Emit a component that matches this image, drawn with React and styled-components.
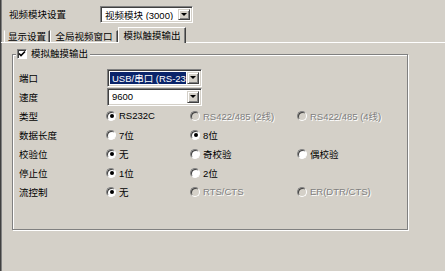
import React from "react"
import styled, { createGlobalStyle } from "styled-components"

const GlobalStyle = createGlobalStyle`
  html, body {
    margin: 0;
    background: #d4d0c8;
  }
  body {
    font-family: "Liberation Sans", "Noto Sans CJK SC", sans-serif;
    font-size: 9.5px;
    color: #000;
  }
`

const Window = styled.div`
  width: 445px;
  height: 271px;
  box-sizing: border-box;
  background: #d4d0c8;
  border-left: 1px solid #404040;
  box-shadow: inset 1px 0 #808080;
  overflow: hidden;
`

const TopRow = styled.div`
  display: flex;
  align-items: center;
  height: 27px;
  box-sizing: border-box;
  padding: 6px 0 0 8px;
  align-items: flex-start;
`

const TopLabel = styled.span`
  width: 91px;
  line-height: 17px;
`

const SelectBox = styled.div`
  display: flex;
  box-sizing: border-box;
  width: ${({ $w }) => $w}px;
  height: ${({ $h }) => $h}px;
  background: #fff;
  border: 1px solid;
  border-color: #808080 #fff #fff #808080;
  box-shadow: inset 1px 1px #404040, inset -1px -1px #d4d0c8;
  padding: 2px 2px 2px 2px;
`

const SelectValue = styled.span`
  flex: 1;
  overflow: hidden;
  white-space: nowrap;
  display: flex;
  align-items: center;
  padding-left: 2px;
  margin-right: 1px;
  background: ${({ $hl }) => ($hl ? "#0a246a" : "#fff")};
  color: ${({ $hl }) => ($hl ? "#fff" : "#000")};
`

const ArrowButton = styled.span`
  width: 12px;
  box-sizing: border-box;
  background: #d4d0c8;
  border: 1px solid;
  border-color: #d4d0c8 #404040 #404040 #d4d0c8;
  box-shadow: inset 1px 1px #fff, inset -1px -1px #808080;
  display: flex;
  align-items: center;
  justify-content: center;
  &::after {
    content: "";
    width: 0;
    height: 0;
    border-left: 3px solid transparent;
    border-right: 3px solid transparent;
    border-top: 3px solid #000;
  }
`

const TabStrip = styled.div`
  display: flex;
  align-items: flex-end;
  height: 16px;
  box-sizing: border-box;
  padding-left: 3px;
  border-bottom: 1px solid #fff;
`

const Tab = styled.div`
  box-sizing: border-box;
  width: ${({ $w }) => $w}px;
  height: ${({ $active }) => ($active ? 16 : 12)}px;
  margin-bottom: ${({ $active }) => ($active ? -1 : 0)}px;
  padding-top: ${({ $active }) => ($active ? 2 : 0)}px;
  background: #d4d0c8;
  border-left: 1px solid #fff;
  border-top: 1px solid ${({ $active }) => ($active ? "#fff" : "#d4d0c8")};
  border-right: 1px solid #404040;
  box-shadow: inset -1px 0 #808080;
  text-align: center;
  line-height: 11px;
  white-space: nowrap;
`

const Panel = styled.div`
  padding: 5px 0 0 11px;
`

const GroupBox = styled.fieldset`
  margin: 0;
  width: 396px;
  height: 182px;
  box-sizing: border-box;
  padding: 8px 0 0 6px;
  border: 1px solid #808080;
  box-shadow: inset 1px 1px #fff, 1px 1px #fff;
  min-inline-size: 0;
`

const Legend = styled.legend`
  display: flex;
  align-items: center;
  gap: 4px;
  margin-left: -3px;
  padding: 0 2px 0 1px;
  line-height: 12px;
  background: #d4d0c8;
`

const CheckBox = styled.span`
  width: 10px;
  height: 10px;
  box-sizing: border-box;
  background: #fff;
  border: 1px solid;
  border-color: #808080 #fff #fff #808080;
  box-shadow: inset 1px 1px #404040;
  display: flex;
  align-items: center;
  justify-content: center;
`

const Grid = styled.div`
  display: grid;
  grid-template-columns: 87px 84px 107px 1fr;
  grid-auto-rows: 19px;
  align-items: center;
`

const Label = styled.span`
  grid-column: 1;
`

const SelectCell = styled.div`
  grid-column: 2 / span 3;
  padding-left: 1px;
`

const Option = styled.label`
  display: flex;
  align-items: center;
  gap: 3px;
  white-space: nowrap;
  color: ${({ $disabled }) => ($disabled ? "#808080" : "#000")};
  text-shadow: ${({ $disabled }) => ($disabled ? "1px 1px 0 #fff" : "none")};
`

const Radio = styled.span`
  flex: none;
  width: 10px;
  height: 10px;
  box-sizing: border-box;
  border-radius: 50%;
  border: 1px solid;
  border-color: #808080 #fff #fff #808080;
  background: ${({ $disabled }) => ($disabled ? "#d4d0c8" : "#fff")};
  box-shadow: inset 1px 1px #404040;
  display: flex;
  align-items: center;
  justify-content: center;
  &::after {
    content: "";
    display: ${({ $checked }) => ($checked ? "block" : "none")};
    width: 4px;
    height: 4px;
    border-radius: 50%;
    background: #000;
    margin: 1px 0 0 1px;
  }
`

const rows = [
  { label: "端口", select: { value: "USB/串口 (RS-232C)", hl: true } },
  { label: "速度", select: { value: "9600" } },
  {
    label: "类型",
    options: [
      { t: "RS232C", checked: true },
      { t: "RS422/485 (2线)", disabled: true },
      { t: "RS422/485 (4线)", disabled: true },
    ],
  },
  { label: "数据长度", options: [{ t: "7位" }, { t: "8位", checked: true }] },
  {
    label: "校验位",
    options: [{ t: "无", checked: true }, { t: "奇校验" }, { t: "偶校验" }],
  },
  { label: "停止位", options: [{ t: "1位", checked: true }, { t: "2位" }] },
  {
    label: "流控制",
    options: [
      { t: "无", checked: true },
      { t: "RTS/CTS", disabled: true },
      { t: "ER(DTR/CTS)", disabled: true },
    ],
  },
]

function Dropdown({ w, h, value, hl }) {
  return (
    <SelectBox $w={w} $h={h}>
      <SelectValue $hl={hl}>{value}</SelectValue>
      <ArrowButton />
    </SelectBox>
  )
}

export default function App() {
  return (
    <Window>
      <GlobalStyle />
      <TopRow>
        <TopLabel>视频模块设置</TopLabel>
        <Dropdown w={93} h={17} value="视频模块 (3000)" />
      </TopRow>
      <TabStrip>
        <Tab $w={46}>显示设置</Tab>
        <Tab $w={68}>全局视频窗口</Tab>
        <Tab $w={68} $active>模拟触摸输出</Tab>
      </TabStrip>
      <Panel>
        <GroupBox>
          <Legend>
            <CheckBox>
              <svg width="8" height="8" viewBox="0 0 8 8">
                <path d="M1 3.5 L3 5.5 L7 1.5" stroke="#000" strokeWidth="1.6" fill="none" />
              </svg>
            </CheckBox>
            模拟触摸输出
          </Legend>
          <Grid>
            {rows.map((row) => (
              <React.Fragment key={row.label}>
                <Label>{row.label}</Label>
                {row.select ? (
                  <SelectCell>
                    <Dropdown w={95} h={18} value={row.select.value} hl={row.select.hl} />
                  </SelectCell>
                ) : (
                  row.options.map((o) => (
                    <Option key={o.t} $disabled={o.disabled}>
                      <Radio $checked={o.checked} $disabled={o.disabled} />
                      {o.t}
                    </Option>
                  ))
                )}
              </React.Fragment>
            ))}
          </Grid>
        </GroupBox>
      </Panel>
    </Window>
  )
}
